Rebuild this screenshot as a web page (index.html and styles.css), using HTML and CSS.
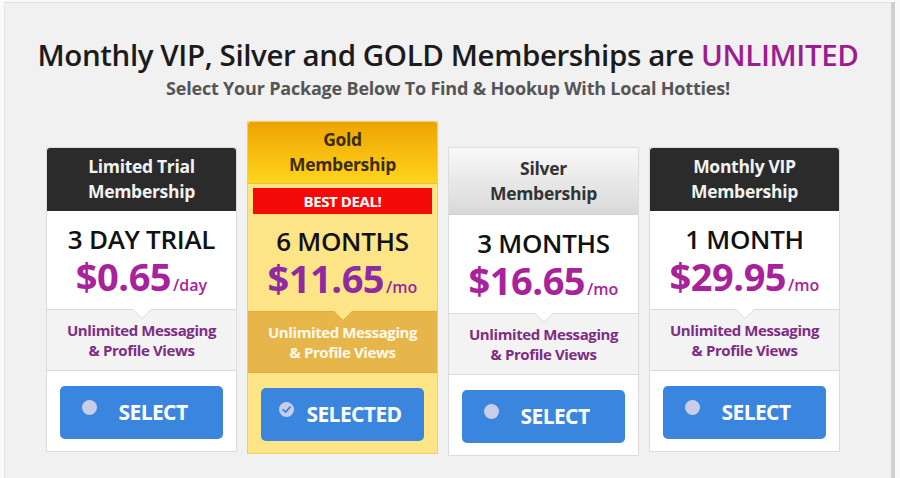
FILE: index.html
```html
<!DOCTYPE html>
<html>
<head>
<meta charset="utf-8">
<link rel="stylesheet" href="styles.css">
</head>
<body>
<div class="panel">
  <h1 class="title">Monthly VIP, Silver and GOLD Memberships are <span class="hl">UNLIMITED</span></h1>
  <p class="subtitle">Select Your Package Below To Find &amp; Hookup With Local Hotties!</p>
  <div class="plans">
    <div class="card card-dark">
      <div class="head">Limited Trial<br>Membership</div>
      <div class="body">
        <div class="term">3 DAY TRIAL</div>
        <div class="price">$0.65<span class="unit">/day</span></div>
        <div class="feature">Unlimited Messaging<br>&amp; Profile Views</div>
        <div class="btn"><span class="dot"></span>SELECT</div>
      </div>
    </div>
    <div class="card card-gold">
      <div class="head">Gold<br>Membership</div>
      <div class="body">
        <div class="badge">BEST DEAL!</div>
        <div class="term">6 MONTHS</div>
        <div class="price">$11.65<span class="unit">/mo</span></div>
        <div class="feature">Unlimited Messaging<br>&amp; Profile Views</div>
        <div class="btn"><svg class="check" width="15" height="15" viewBox="0 0 16 16"><circle cx="8" cy="8" r="8" fill="#c9cdea"/><path d="M4.3 8.2 L7 10.8 L11.8 5.4" fill="none" stroke="#3a86de" stroke-width="1.9" stroke-linecap="round" stroke-linejoin="round"/></svg>SELECTED</div>
      </div>
    </div>
    <div class="card card-silver">
      <div class="head">Silver<br>Membership</div>
      <div class="body">
        <div class="term">3 MONTHS</div>
        <div class="price">$16.65<span class="unit">/mo</span></div>
        <div class="feature">Unlimited Messaging<br>&amp; Profile Views</div>
        <div class="btn"><span class="dot"></span>SELECT</div>
      </div>
    </div>
    <div class="card card-dark">
      <div class="head">Monthly VIP<br>Membership</div>
      <div class="body">
        <div class="term">1 MONTH</div>
        <div class="price">$29.95<span class="unit">/mo</span></div>
        <div class="feature">Unlimited Messaging<br>&amp; Profile Views</div>
        <div class="btn"><span class="dot"></span>SELECT</div>
      </div>
    </div>
  </div>
</div>
</body>
</html>
```
FILE: styles.css
```css
* { box-sizing: border-box; }
html, body { margin: 0; padding: 0; }
body {
  background: #fafafa;
  font-family: "Open Sans", "DejaVu Sans", sans-serif;
  width: 900px;
  height: 478px;
  overflow: hidden;
}
.panel {
  margin: 2px 4px 0 4px;
  width: 891px;
  height: 476px;
  background: #f1f1f1;
  border-top: 1px solid #dcdcdc;
  border-left: 1px solid #e3e3e3;
  border-right: 4px solid #cfcfcf;
  padding-top: 34px;
}
.title {
  margin: 0;
  text-align: center;
  font-size: 29.5px;
  font-weight: 600;
  line-height: 36px;
  color: #1b1b1b;
  letter-spacing: -0.4px;
}
.hl { color: #9c1d90; }
.subtitle {
  margin: 3px 0 0;
  text-align: center;
  font-size: 18px;
  font-weight: 700;
  line-height: 24px;
  color: #555;
  letter-spacing: -0.2px;
}
.plans {
  display: flex;
  align-items: flex-start;
  gap: 10px;
  padding-left: 41px;
  margin-top: 21px;
}
.card {
  width: 191px;
  background: #fff;
  border: 1px solid #dcdcdc;
  display: flex;
  flex-direction: column;
  margin-top: 26px;
}
.head {
  text-align: center;
  font-size: 17.5px;
  font-weight: 700;
  line-height: 25px;
  padding: 6px 0 7px;
  border-radius: 3px 3px 0 0;
  letter-spacing: -0.3px;
}
.card-dark .head { background: #2b2b2b; color: #f2f2f2; }
.card-silver .head {
  background: linear-gradient(#f8f8f8, #d9d9d9);
  color: #333;
  padding: 8px 0 8px;
  border-bottom: 1px solid #d0d0d0;
}
.card-gold {
  margin-top: 0;
  background: #fde487;
  border: 1px solid #f1d060;
}
.card-gold .head {
  background: linear-gradient(#efa300, #ffd51e);
  color: #3a2c05;
  padding: 5px 0 6px;
  border-bottom: 1px solid #e9c23a;
}
.body {
  display: flex;
  flex-direction: column;
  align-items: stretch;
  padding: 12px 0 12px;
}
.card-gold .body { padding-top: 4px; }
.badge {
  margin: 0 5px 11px;
  height: 26px;
  background: #f50a0a;
  color: #fff;
  font-size: 15px;
  font-weight: 700;
  line-height: 26px;
  text-align: center;
  letter-spacing: -0.4px;
}
.term {
  text-align: center;
  font-size: 26px;
  font-weight: 600;
  line-height: 32px;
  color: #111;
  letter-spacing: -0.3px;
}
.price {
  text-align: center;
  font-size: 38px;
  font-weight: 700;
  line-height: 42px;
  height: 42px;
  color: #a8229b;
  letter-spacing: -0.5px;
}
.card-gold .price { color: #8e2aa2; }
.unit { font-size: 16px; font-weight: 600; letter-spacing: 0; margin-left: 2px; line-height: 0; }
.feature {
  position: relative;
  margin-top: 12px;
  padding: 10px 0;
  background: #f3f3f3;
  border-top: 1px solid #dadada;
  border-bottom: 1px solid #dadada;
  text-align: center;
  font-size: 15px;
  font-weight: 700;
  line-height: 20px;
  color: #7e2c84;
  letter-spacing: -0.4px;
}
.feature::before, .feature::after {
  content: "";
  position: absolute;
  left: 50%;
  width: 0; height: 0;
  border-left: 9px solid transparent;
  border-right: 9px solid transparent;
  transform: translateX(-50%);
}
.feature::before { top: 0; border-top: 9px solid #dadada; }
.feature::after { top: -1px; border-top: 9px solid #fff; }
.card-gold .feature {
  background: #e7b64b;
  border-color: #e2ad3a;
  color: #fff9ea;
}
.card-gold .feature::before { border-top-color: #e2ad3a; }
.card-gold .feature::after { border-top-color: #fde487; }
.btn {
  margin: 15px 13px 0;
  height: 53px;
  background: #3a86de;
  border-radius: 5px;
  color: #fff;
  font-size: 21px;
  font-weight: 700;
  letter-spacing: -0.6px;
  display: flex;
  align-items: center;
  justify-content: center;
  gap: 22px;
  padding-right: 14px;
  padding-bottom: 2px;
}
.card-gold .btn { gap: 12px; padding-right: 4px; }
.dot {
  width: 15px;
  height: 15px;
  border-radius: 50%;
  background: #c9cdea;
  margin-top: -8px;
}
.check { margin-top: -8px; }
```
